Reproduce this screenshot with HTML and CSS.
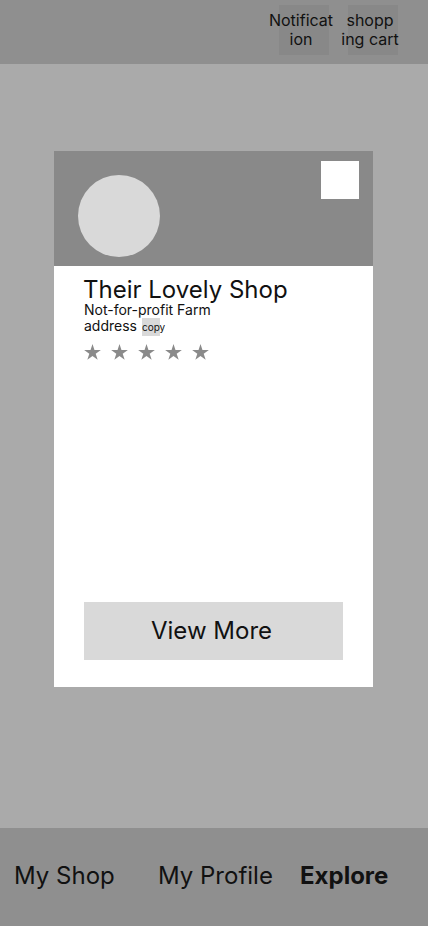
FILE: index.html
```html
<!DOCTYPE html>
<html lang="en">
<head>
<meta charset="utf-8">
<title>Explore</title>
<link rel="stylesheet" href="styles.css">
</head>
<body>
<div class="screen">
  <header class="topbar">
    <div class="top-btn"><span class="top-label">Notificat<br>ion</span></div>
    <div class="top-btn"><span class="top-label">shopp<br>ing cart</span></div>
  </header>
  <main class="content">
    <article class="card">
      <div class="card-head">
        <div class="avatar"></div>
        <div class="fav"></div>
      </div>
      <div class="card-body">
        <h1 class="shop-name">Their Lovely Shop</h1>
        <p class="line">Not-for-profit Farm</p>
        <p class="line">address <span class="copy">copy</span></p>
        <div class="stars">
          <svg class="star" viewBox="0 0 24 23"><path d="M12 0l2.83 8.7H24l-7.41 5.38 2.83 8.7L12 17.4l-7.42 5.38 2.83-8.7L0 8.7h9.17z"/></svg>
          <svg class="star" viewBox="0 0 24 23"><path d="M12 0l2.83 8.7H24l-7.41 5.38 2.83 8.7L12 17.4l-7.42 5.38 2.83-8.7L0 8.7h9.17z"/></svg>
          <svg class="star" viewBox="0 0 24 23"><path d="M12 0l2.83 8.7H24l-7.41 5.38 2.83 8.7L12 17.4l-7.42 5.38 2.83-8.7L0 8.7h9.17z"/></svg>
          <svg class="star" viewBox="0 0 24 23"><path d="M12 0l2.83 8.7H24l-7.41 5.38 2.83 8.7L12 17.4l-7.42 5.38 2.83-8.7L0 8.7h9.17z"/></svg>
          <svg class="star" viewBox="0 0 24 23"><path d="M12 0l2.83 8.7H24l-7.41 5.38 2.83 8.7L12 17.4l-7.42 5.38 2.83-8.7L0 8.7h9.17z"/></svg>
        </div>
        <button class="view-more">View More</button>
      </div>
    </article>
  </main>
  <nav class="tabbar">
    <span class="tab">My Shop</span>
    <span class="tab">My Profile</span>
    <span class="tab active">Explore</span>
  </nav>
</div>
</body>
</html>
```
FILE: styles.css
```css
* { box-sizing: border-box; }
html, body { margin: 0; padding: 0; }
body {
  font-family: Inter, "Noto Sans", sans-serif;
  color: #000;
  background: #aaaaaa;
}
.screen {
  width: 428px;
  height: 926px;
  display: flex;
  flex-direction: column;
  overflow: hidden;
}
.topbar {
  height: 64px;
  flex: none;
  background: #8f8f8f;
  display: flex;
  justify-content: flex-end;
  align-items: flex-start;
  gap: 19px;
  padding: 5px 30px 0 0;
}
.top-btn {
  width: 50px;
  height: 50px;
  background: #888888;
  display: flex;
  align-items: center;
  justify-content: flex-start;
}
.top-label {
  flex: none;
  width: 66px;
  margin-left: -11px;
  text-align: center;
  font-size: 16px;
  line-height: 19px;
  color: #111;
}
.content {
  flex: 1;
  background: #aaaaaa;
  padding: 87px 0 0 54px;
}
.card {
  width: 319px;
  height: 536px;
  background: #ffffff;
  display: flex;
  flex-direction: column;
}
.card-head {
  height: 115px;
  flex: none;
  background: #898989;
  display: flex;
  justify-content: space-between;
  align-items: flex-start;
  padding: 10px 14px 0 24px;
}
.avatar {
  width: 82px;
  height: 82px;
  border-radius: 50%;
  background: #d9d9d9;
  margin-top: 14px;
}
.fav {
  width: 38px;
  height: 38px;
  background: #ffffff;
}
.card-body {
  flex: 1;
  display: flex;
  flex-direction: column;
  padding: 12px 30px 27px 30px;
}
.shop-name {
  margin: 0 0 0 -1px;
  font-size: 24px;
  font-weight: 400;
  line-height: 24px;
  color: #111;
}
.line {
  margin: 0;
  font-size: 14px;
  line-height: 16px;
  color: #111;
}
.copy {
  display: inline-block;
  width: 18px;
  height: 18px;
  margin-left: 1px;
  background: #d9d9d9;
  font-size: 10px;
  line-height: 18px;
  vertical-align: baseline;
  white-space: nowrap;
  overflow: visible;
}
.stars {
  display: flex;
  gap: 10px;
  margin-top: 8px;
}
.star {
  width: 17px;
  height: 16px;
  fill: #8a8a8a;
}
.view-more {
  margin-top: auto;
  height: 58px;
  width: 100%;
  border: none;
  background: #d9d9d9;
  font-family: Inter, "Noto Sans", sans-serif;
  font-size: 24px;
  color: #111;
  padding: 0 4px 2px 0;
}
.tabbar {
  height: 98px;
  flex: none;
  background: #8f8f8f;
  display: grid;
  grid-template-columns: 144px 142px auto;
  align-items: center;
  padding: 0 0 4px 14px;
}
.tab {
  font-size: 24px;
  color: #111;
}
.tab.active {
  font-weight: 700;
}
```
